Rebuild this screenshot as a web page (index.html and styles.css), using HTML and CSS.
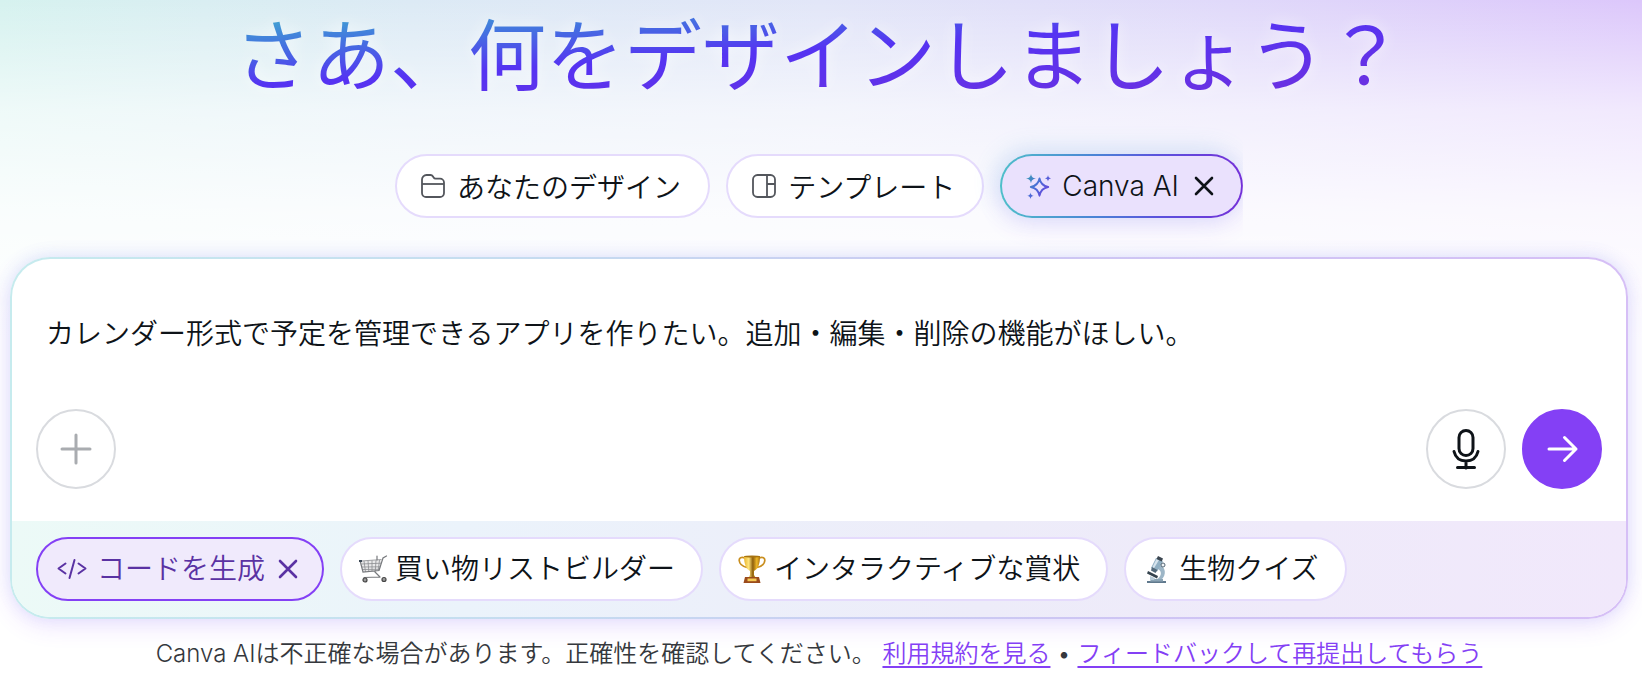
FILE: index.html
```
<!DOCTYPE html>
<html lang="ja">
<head>
    <title>Canva AI</title>
    <meta charset="UTF-8">
    <meta name="viewport" content="width=device-width, initial-scale=1">
    <link rel="stylesheet" href="styles.css">
</head>
<body>
    <main class="home">
        <h1 class="title">さあ、何をデザインしましょう？</h1>

        <div class="tabs">
            <button type="button" class="chip">
                <svg class="icon" viewBox="0 0 24 24" fill="none" stroke="#53565c" stroke-width="1.8" stroke-linejoin="round">
                    <path d="M1 5.500a4.500 4.500 0 0 1 4.500-4.500h4c1.200 0 1.900.5 2.500 1.500l.6 1c.5.8 1.200 1.100 2 1.100h4.400a4 4 0 0 1 4 4V19a4 4 0 0 1-4 4H5a4 4 0 0 1-4-4z"/>
                    <path d="M1 10h22"/>
                </svg>
                あなたのデザイン
            </button>
            <button type="button" class="chip">
                <svg class="icon" viewBox="0 0 24 24" fill="none" stroke="#53565c" stroke-width="1.8">
                    <rect x="1" y="1" width="22" height="22" rx="4.500"/>
                    <path d="M15 1v22M15 10h8"/>
                </svg>
                テンプレート
            </button>
            <button type="button" class="chip chip-ai">
                <svg class="icon" viewBox="0 0 24 24">
                    <defs>
                        <linearGradient id="spark" gradientUnits="userSpaceOnUse" x1="0" y1="2" x2="22" y2="18">
                            <stop offset="0" stop-color="#3a9bb5"/>
                            <stop offset=".5" stop-color="#4a6fd6"/>
                            <stop offset="1" stop-color="#6a45dd"/>
                        </linearGradient>
                    </defs>
                    <path d="M13.500 4.500c1 5.200 3.300 7.500 8.700 8.500-5.400 1-7.700 3.300-8.700 8.700-1-5.400-3.300-7.700-8.700-8.700 5.400-1 7.700-3.300 8.700-8.500z" fill="none" stroke="url(#spark)" stroke-width="1.900" stroke-linejoin="round"/>
                    <path d="M5 0c.6 3 1.700 4 5 4.600-3.300.6-4.400 1.700-5 4.700-.6-3-1.700-4.100-5-4.700C3.300 4 4.400 3 5 0zM22 1c.4 2.200 1.100 2.900 3.200 3.300C23.100 4.700 22.400 5.400 22 7.600c-.4-2.200-1.100-2.900-3.200-3.300C20.900 3.900 21.600 3.200 22 1zM4.500 18.500c.4 2.200 1.100 2.900 3.200 3.300-2.100.4-2.800 1.100-3.200 3.300-.4-2.200-1.100-2.900-3.200-3.300 2.100-.4 2.800-1.100 3.200-3.300z" fill="url(#spark)"/>
                </svg>
                Canva AI
                <svg class="close" viewBox="0 0 20 20" fill="none" stroke="#0e1318" stroke-width="2.600" stroke-linecap="round">
                    <path d="M2 2l16 16M18 2L2 18"/>
                </svg>
            </button>
        </div>

        <form class="card">
            <div class="prompt">
                <textarea class="prompt-text" rows="1" aria-label="プロンプト">カレンダー形式で予定を管理できるアプリを作りたい。追加・編集・削除の機能がほしい。</textarea>
                <div class="actions">
                    <button type="button" class="round" aria-label="追加">
                        <svg viewBox="0 0 32 32" fill="none" stroke="#a9acb0" stroke-width="3" stroke-linecap="round">
                            <path d="M16 2v28M2 16h28"/>
                        </svg>
                    </button>
                    <div class="actions-right">
                        <button type="button" class="round" aria-label="音声入力">
                            <svg class="mic" viewBox="0 0 28 40" fill="none" stroke="#0e1318" stroke-width="3" stroke-linecap="round">
                                <rect x="7" y="1.500" width="14" height="25" rx="7"/>
                                <path d="M2 22.500c1.500 6 6 9.500 12 9.500s10.500-3.500 12-9.500M14 32v7M5.500 38.500h17"/>
                            </svg>
                        </button>
                        <button type="submit" class="round round-send" aria-label="送信">
                            <svg viewBox="0 0 32 32" fill="none" stroke="#fff" stroke-width="3" stroke-linecap="round" stroke-linejoin="round">
                                <path d="M3 16h27M18.500 4.500L30 16 18.500 27.500"/>
                            </svg>
                        </button>
                    </div>
                </div>
            </div>

            <div class="suggestions">
                <button type="button" class="chip chip-selected">
                    <svg class="code" viewBox="0 0 30 20" fill="none" stroke="#5a32a3" stroke-width="2" stroke-linecap="round" stroke-linejoin="round">
                        <path d="M8.500 4.500L1.500 9.500l7 5M21.500 4.500l7 5-7 5M17.500 1l-5 18"/>
                    </svg>
                    <span class="label">コードを生成</span>
                    <svg class="close" viewBox="0 0 20 20" fill="none" stroke="#5a32a3" stroke-width="2.600" stroke-linecap="round">
                        <path d="M2 2l16 16M18 2L2 18"/>
                    </svg>
                </button>
                <button type="button" class="chip chip-emoji">
                    <svg class="emoji" viewBox="0 0 28 28" fill="none">
                        <path d="M1.500 6l21-1.500-1.500 11-17 1.500z" fill="#e9e9ea"/>
                        <path d="M2 6l20.500-1.500M2.500 9l19.500-.8M3 12l18.500-.2M3.500 14.500l17.500-.2M5 6l1.500 11M9 5.700l.8 11M13 5.400v11M17 5.200l-.7 11M20.500 5l-1.300 10.500" stroke="#8b8d90" stroke-width=".8"/>
                        <path d="M1 5.500L4 17l16-1.500L24 3l3.500-2M16 17l5 5M5 22.500l16-.5M18 1v4" stroke="#77797d" stroke-width="1.200" stroke-linecap="round"/>
                        <path d="M0 5h3v2H0z" fill="#3c4855"/>
                        <circle cx="6" cy="25" r="2" fill="#999" stroke="#444" stroke-width="1.200"/>
                        <circle cx="25" cy="24.500" r="2" fill="#999" stroke="#444" stroke-width="1.200"/>
                    </svg>
                    <span class="label">買い物リストビルダー</span>
                </button>
                <button type="button" class="chip chip-emoji">
                    <svg class="emoji" viewBox="0 0 28 28">
                        <defs>
                            <linearGradient id="gold">
                                <stop offset="0" stop-color="#e9b52f"/>
                                <stop offset=".3" stop-color="#ffe57c"/>
                                <stop offset=".55" stop-color="#8f5f0c"/>
                                <stop offset=".8" stop-color="#efb827"/>
                                <stop offset="1" stop-color="#a8700f"/>
                            </linearGradient>
                        </defs>
                        <path d="M7 3C3 1.500 1 3 1.200 5.500 1.500 9 5 11.500 9 12.500M21 3c4-1.500 6 0 5.800 2.500C26.500 9 23 11.500 19 12.500" fill="none" stroke="#c98e1e" stroke-width="1.700"/>
                        <path d="M6 1h16c0 8-2 13-6 15v4l2 3h-8l2-3v-4C8 14 6 9 6 1z" fill="url(#gold)"/>
                        <ellipse cx="14" cy="1.500" rx="8" ry="1" fill="#a77310"/>
                        <path d="M7 22h14l1.500 6h-17z" fill="#9b4b1c"/>
                        <path d="M9.500 23.500h9v2.700h-9z" fill="#f5ca55"/>
                    </svg>
                    <span class="label">インタラクティブな賞状</span>
                </button>
                <button type="button" class="chip chip-emoji">
                    <svg class="emoji" viewBox="0 0 28 28">
                        <path d="M4 26h19v2H4z" fill="#60798d"/>
                        <path d="M15 10c8 1 9 10 3 15h-5c5-3 7-8 2-11z" fill="#9db6c7"/>
                        <path d="M8 24h12v2.500H7z" fill="#8ba4b5"/>
                        <path d="M13 3l7 3.500-6 10-6-3.500z" fill="#90afc3"/>
                        <path d="M13.500 4l2.500 1-5.500 9-1.500-1z" fill="#d5e3ed"/>
                        <path d="M15 1l5 2.500-1.200 3L13.500 4z" fill="#3b4650"/>
                        <path d="M9 12l5.500 3-2 3-4.500-2.500z" fill="#53697a"/>
                        <path d="M5 16l10 5-1 2.500L4 18.500z" fill="#35434e"/>
                        <circle cx="20" cy="10" r="2" fill="#f1f5f8" stroke="#536674"/>
                        <path d="M7 21l5 2-1 2H7z" fill="#b8cbd8"/>
                    </svg>
                    <span class="label">生物クイズ</span>
                </button>
            </div>
        </form>

        <p class="note">
            Canva AIは不正確な場合があります。正確性を確認してください。
            <a href="#">利用規約を見る</a> • <a href="#">フィードバックして再提出してもらう</a>
        </p>
    </main>
</body>
</html>
```
FILE: styles.css
```
* { box-sizing: border-box; }

body {
    margin: 0;
    min-height: 100vh;
    font-family: Inter, "Noto Sans CJK JP", sans-serif;
    font-weight: 350;
    color: #0e1318;
    background:
        linear-gradient(to bottom, rgba(255, 255, 255, 0) 0, rgba(255, 255, 255, .6) 110px, rgba(255, 255, 255, .86) 210px, #fff 340px),
        linear-gradient(to right, #d6f2ef 0, #dceaf5 25%, #e2e6f8 50%, #e0d9fa 75%, #dcc7fb 100%);
}

button, textarea { font: inherit; color: inherit; }
button { cursor: pointer; }
svg { flex: none; overflow: visible; }

.home { padding: 4px 14px 0 10px; }

.title {
    margin: 0 0 44px;
    font-size: 78px;
    font-weight: 400;
    line-height: 106px;
    text-align: center;
    color: transparent;
    background: linear-gradient(to bottom right, #3fb8cc 10%, #4472e0 28%, #5533f2 46%, #7030dd 90%);
    -webkit-background-clip: text;
    background-clip: text;
    filter: drop-shadow(0 0 8px rgba(255, 255, 255, .7));
}

.tabs { display: flex; justify-content: center; gap: 16px; }

.chip {
    display: flex;
    align-items: center;
    gap: 12px;
    height: 64px;
    padding: 0 27px 0 24px;
    border: 2px solid #e5dbfc;
    border-radius: 32px;
    background: #fff;
    font-size: 28px;
    white-space: nowrap;
}
.icon { width: 24px; height: 24px; }
.close { width: 20px; height: 20px; margin-left: 3px; }

.chip-ai {
    border-color: transparent;
    background:
        linear-gradient(#eae1fd, #eae1fd) padding-box,
        linear-gradient(to right, #4fbfca, #4a82d6 40%, #5b52dd 65%, #7430d8) border-box;
    box-shadow: -4px -4px 24px rgba(74, 160, 214, .2), 0 8px 24px rgba(139, 61, 255, .12);
    clip-path: inset(-32px 0 -32px -32px);
}

/* 入力カード */
.card {
    margin-top: 39px;
    border: 2px solid transparent;
    border-radius: 40px;
    background:
        linear-gradient(#fff, #fff) padding-box,
        linear-gradient(to right, #c6ebee, #c5daf0 35%, #cdc6f3 65%, #d6bff6) border-box;
    box-shadow: 0 -2px 16px rgba(80, 150, 220, .12), 0 6px 24px rgba(139, 61, 255, .16);
}
.prompt { padding: 52px 24px 32px; }
.prompt-text {
    display: block;
    width: 100%;
    height: 46px;
    padding: 0 10px;
    border: 0;
    outline: 0;
    resize: none;
    overflow: hidden;
    background: transparent;
    font-size: 28px;
    line-height: 46px;
}
.actions { display: flex; justify-content: space-between; margin-top: 52px; }
.actions-right { display: flex; gap: 16px; }

.round {
    display: flex;
    align-items: center;
    justify-content: center;
    width: 80px;
    height: 80px;
    padding: 0;
    border: 2px solid #d9dbdf;
    border-radius: 50%;
    background: #fff;
}
.round svg { width: 32px; height: 32px; }
.round .mic { width: 28px; height: 40px; }
.round-send { border-color: #8440f5; background: #8440f5; }

.suggestions {
    display: flex;
    gap: 16px;
    padding: 16px 24px;
    border-radius: 0 0 38px 38px;
    background: linear-gradient(to right, #ecfaf7, #ebf3fb 28%, #edecf9 60%, #f1e8fb);
}
.label { padding-bottom: 4px; }
.chip-selected {
    gap: 10px;
    padding: 0 24px 0 19px;
    border-color: #8440f5;
    background: #f0eafc;
    color: #5a32a3;
}
.code { width: 30px; height: 20px; }
.chip-emoji { gap: 8px; padding: 0 26px 0 17px; }
.emoji { width: 28px; height: 28px; }

.note {
    margin: 17px 0 0;
    font-size: 24px;
    line-height: 36px;
    text-align: center;
    color: #35383d;
}
.note a {
    color: #8440f5;
    text-decoration-thickness: 2px;
    text-underline-offset: 4px;
}
```
